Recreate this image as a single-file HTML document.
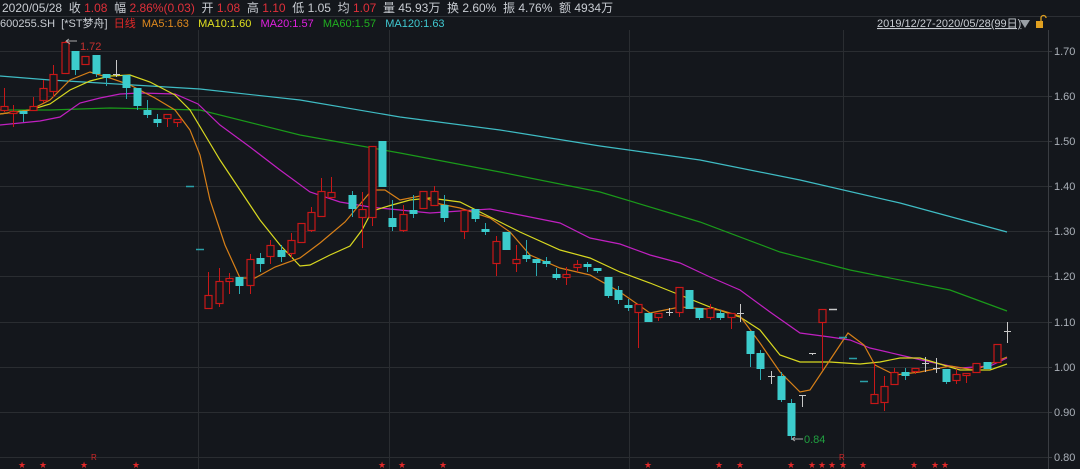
<!DOCTYPE html>
<html><head><meta charset="utf-8"><style>
body{margin:0;background:#14171c;width:1080px;height:469px;overflow:hidden;font-family:"Liberation Sans","Noto Sans CJK SC",sans-serif;}
.h1{position:absolute;top:0;left:2px;height:16px;font-size:12px;line-height:16px;color:#c8ccd2;white-space:nowrap}
.r{color:#e0303a}
.h2{position:absolute;top:17px;left:0;font-size:11px;line-height:14px;color:#c8ccd2;white-space:nowrap}
svg{position:absolute;left:0;top:0}
</style></head><body>
<svg id="s" width="1080" height="469" xmlns="http://www.w3.org/2000/svg">
<line x1="0" y1="16.5" x2="1080" y2="16.5" stroke="#2c2f34"/>
<g stroke="#2a2d31" stroke-width="1">
<line x1="0" y1="51.5" x2="1048" y2="51.5"/><line x1="0" y1="96.5" x2="1048" y2="96.5"/><line x1="0" y1="141.5" x2="1048" y2="141.5"/><line x1="0" y1="186.5" x2="1048" y2="186.5"/><line x1="0" y1="231.5" x2="1048" y2="231.5"/><line x1="0" y1="276.5" x2="1048" y2="276.5"/><line x1="0" y1="322.5" x2="1048" y2="322.5"/><line x1="0" y1="367.5" x2="1048" y2="367.5"/><line x1="0" y1="412.5" x2="1048" y2="412.5"/><line x1="0" y1="457.5" x2="1048" y2="457.5"/>
<line x1="198.5" y1="30" x2="198.5" y2="469"/><line x1="389.5" y1="30" x2="389.5" y2="469"/><line x1="629.5" y1="30" x2="629.5" y2="469"/><line x1="843.5" y1="30" x2="843.5" y2="469"/>
<line x1="1048.5" y1="30" x2="1048.5" y2="469" stroke="#3a3d42"/>
</g>
<g fill="#aab0b8" font-size="11" font-family="Liberation Sans">
<text x="1054" y="55">1.70</text><text x="1054" y="100">1.60</text><text x="1054" y="145">1.50</text><text x="1054" y="190">1.40</text><text x="1054" y="235">1.30</text><text x="1054" y="280">1.20</text><text x="1054" y="326">1.10</text><text x="1054" y="371">1.00</text><text x="1054" y="416">0.90</text><text x="1054" y="461">0.80</text>
</g>
<g stroke="#3a3d42"><line x1="1048" y1="51.5" x2="1052" y2="51.5"/><line x1="1048" y1="96.5" x2="1052" y2="96.5"/><line x1="1048" y1="141.5" x2="1052" y2="141.5"/><line x1="1048" y1="186.5" x2="1052" y2="186.5"/><line x1="1048" y1="231.5" x2="1052" y2="231.5"/><line x1="1048" y1="276.5" x2="1052" y2="276.5"/><line x1="1048" y1="322.5" x2="1052" y2="322.5"/><line x1="1048" y1="367.5" x2="1052" y2="367.5"/><line x1="1048" y1="412.5" x2="1052" y2="412.5"/><line x1="1048" y1="457.5" x2="1052" y2="457.5"/></g>
<text x="877" y="27" fill="#c8ccd2" font-size="11" font-family="Liberation Sans,Noto Sans CJK SC,sans-serif" text-decoration="underline">2019/12/27-2020/05/28(99日)</text>
<polygon points="1020,20 1030,20 1025,28" fill="#9aa0a6"/>
<rect x="1036" y="21" width="7" height="7" fill="#e0a020"/>
<path d="M1041 21 v-3 a2.5 2.5 0 0 1 5 0" stroke="#e0a020" fill="none" stroke-width="1.3"/>
<g id="ma" fill="none" stroke-width="1.2"></g>
<g id="cd"></g>
<text x="80" y="50" fill="#c8302e" font-size="11" font-family="Liberation Sans">1.72</text>
<path d="M66 41 l4 3 M66 41 l3 -2 M66 41 h11" stroke="#aaa" fill="none"/>
<text x="804" y="443" fill="#20a040" font-size="11" font-family="Liberation Sans">0.84</text>
<path d="M792 439 h11 M792 439 l3 -2 M792 439 l3 2" stroke="#aaa" fill="none"/>
<g fill="#e02828" font-size="9" font-family="DejaVu Sans" id="st"></g>
<g fill="#d02828" font-size="8" font-family="Liberation Sans"><text x="91" y="460">R</text><text x="839" y="460">R</text></g>
</svg>
<div class="h1">2020/05/28&nbsp; 收 <span class="r">1.08</span>&nbsp; 幅 <span class="r">2.86%(0.03)</span>&nbsp; 开 <span class="r">1.08</span>&nbsp; 高 <span class="r">1.10</span>&nbsp; 低 1.05&nbsp; 均 <span class="r">1.07</span>&nbsp; 量 45.93万&nbsp; 换 2.60%&nbsp; 振 4.76%&nbsp; 额 4934万</div>
<div class="h2">600255.SH&nbsp; [*ST梦舟]&nbsp; <span style="color:#e02828">日线</span>&nbsp; <span style="color:#e08a1e">MA5:1.63</span>&nbsp;&nbsp; <span style="color:#e0e020">MA10:1.60</span>&nbsp;&nbsp; <span style="color:#e020e0">MA20:1.57</span>&nbsp;&nbsp; <span style="color:#20b020">MA60:1.57</span>&nbsp;&nbsp; <span style="color:#40c8d0">MA120:1.63</span></div>
<script>
var NS="http://www.w3.org/2000/svg";
function el(p,t,a){var e=document.createElementNS(NS,t);for(var k in a)e.setAttribute(k,a[k]);p.appendChild(e);return e;}
var ma=document.getElementById('ma');
var L=[
["#3fbcc4",[[0,76],[50,80],[100,83],[200,89],[300,100],[400,117],[500,130],[600,146],[700,160],[800,180],[900,203],[1007,232]]],
["#1a9a1a",[[0,110],[50,110],[110,108],[200,110],[300,135],[400,153],[500,172],[600,192],[700,222],[780,252],[850,270],[950,290],[1007,311]]],
["#c020c0",[[0,125],[40,121],[60,117],[80,103],[100,98],[120,94],[140,93],[175,94],[198,104],[220,125],[250,147],[280,170],[310,192],[340,202],[370,207],[400,210],[430,213],[460,211],[490,209],[520,215],[560,223],[590,238],[620,244],[650,255],[680,263],[710,277],[740,290],[770,312],[800,333],[830,337],[850,340],[870,348],[900,355],[930,362],[960,368],[990,366],[1007,358]]],
["#d8d820",[[0,114],[30,110],[50,104],[70,90],[90,81],[110,76],[130,75],[150,82],[175,95],[190,110],[205,135],[220,160],[240,190],[260,220],[280,245],[300,266],[310,265],[330,255],[350,246],[362,230],[372,211],[392,205],[410,200],[430,198],[460,202],[490,217],[520,232],[560,250],[590,258],[620,272],[650,283],[680,295],[710,307],[740,317],[760,330],[780,355],[800,362],[830,362],[860,364],[880,362],[900,358],[920,358],[940,364],[960,370],[990,370],[1007,364]]],
["#d88018",[[0,114],[30,110],[50,100],[70,80],[90,72],[110,78],[130,85],[155,98],[175,110],[190,130],[200,155],[210,200],[225,245],[240,278],[255,278],[275,267],[300,258],[320,243],[345,222],[372,190],[385,190],[400,200],[420,196],[440,204],[460,208],[490,218],[510,232],[530,255],[560,268],[590,275],[620,292],[650,313],[680,307],[720,310],[740,316],[760,343],[780,372],[800,392],[810,390],[830,360],[848,333],[864,345],[875,365],[895,375],[920,372],[950,366],[975,370],[1007,357]]]];
L.forEach(function(l){el(ma,'polyline',{points:l[1].map(function(p){return p.join(',')}).join(' '),stroke:l[0]});});
// type: r=red, c=cyan, w=white cross, d=cyan dash, x=white dash ; x, top, bottom, wickTop, wickBot
var D=[["r",4,106,110,88,112],["r",13,111,113,105,127],["c",23,111,113,111,122],["r",33,106,110,97,110],["r",43,88,100,80,103],["r",53,74,91,65,97],["r",65,42,73,41,73],["c",75,51,69,51,75],["r",85,56,64,56,64],["c",96,55,73,55,77],["c",106,74,77,74,86],["w",116,74,74,60,77],["c",126,75,87,75,99],["c",137,88,105,88,110],["c",147,110,114,100,118],["c",157,119,122,114,127],["r",167,114,118,114,127],["r",177,119,122,119,127],["d",190,186,186,186,186],["d",200,249,249,249,249],["r",208,295,308,272,308],["r",219,281,303,268,307],["r",229,278,281,273,294],["c",239,277,285,277,294],["r",250,259,285,254,294],["c",260,258,263,253,272],["r",270,245,256,240,264],["c",281,250,256,245,262],["r",291,240,253,233,258],["r",301,223,242,223,242],["r",311,212,230,207,232],["r",321,191,216,178,217],["r",331,192,197,177,199],["c",352,195,208,191,217],["r",362,209,217,192,248],["r",372,146,217,146,226],["c",382,141,186,141,186],["c",392,218,226,200,231],["r",403,214,230,205,232],["c",413,210,213,195,218],["r",423,191,208,191,208],["r",434,191,205,186,205],["c",444,205,217,195,222],["r",464,210,231,210,239],["c",475,209,218,209,222],["c",485,229,231,223,235],["r",496,241,263,236,276],["c",506,232,249,232,249],["r",516,259,263,245,272],["c",526,255,258,240,262],["c",536,259,262,259,276],["c",546,261,263,257,267],["c",556,274,277,268,280],["r",566,274,277,267,285],["r",577,264,267,260,272],["c",587,264,266,262,272],["c",597,268,270,268,273],["c",608,277,295,277,298],["c",618,290,299,286,304],["c",628,305,307,299,311],["r",638,304,312,304,348],["c",648,313,321,313,321],["r",658,313,317,313,321],["w",669,312,312,308,316],["r",679,287,312,287,317],["c",689,290,308,290,308],["c",699,308,317,308,320],["r",710,308,317,304,320],["c",720,313,317,310,320],["r",731,313,317,313,329],["w",740,313,313,304,322],["c",750,331,353,331,367],["c",760,353,368,350,380],["w",771,376,376,371,384],["c",781,376,399,372,402],["c",791,403,435,399,440],["w",802,395,395,395,407],["w",812,353,353,353,355],["r",822,309,322,309,370],["x",833,309,309,309,309],["d",843,337,337,337,337],["d",853,358,358,358,358],["d",864,381,381,381,381],["r",874,394,403,363,403],["r",884,386,402,376,411],["r",894,372,384,368,384],["c",905,372,375,368,380],["r",915,368,371,368,374],["w",925,363,363,357,372],["w",936,368,368,358,373],["c",946,369,381,369,384],["r",956,374,380,369,384],["r",966,373,375,373,383],["r",976,363,372,363,372],["c",987,362,368,362,368],["r",997,344,362,344,362],["w",1007,331,331,322,343]];
var cd=document.getElementById('cd');
D.forEach(function(d){var t=d[0],x=d[1];
 var col=t=="r"?"#c81818":t=="w"||t=="x"?"#c8c8c8":"#3ccccc";
 if(t=="d"||t=="x"){el(cd,'line',{x1:x-4,x2:x+4,y1:d[2]+.5,y2:d[2]+.5,stroke:t=="d"?"#2aa0a8":"#c8c8c8","stroke-width":1.5});return;}
 el(cd,'line',{x1:x+.5,x2:x+.5,y1:d[4],y2:d[5],stroke:t=="c"?"#2aa8b0":col});
 if(t=="w"){el(cd,'line',{x1:x-3,x2:x+4,y1:d[2]+.5,y2:d[2]+.5,stroke:col});return;}
 var h=Math.max(d[3]-d[2],1.5);
 if(t=="r")el(cd,'rect',{x:x-3,y:d[2]+.5,width:7,height:h,fill:"#14171c",stroke:col,"stroke-width":1.2});
 else el(cd,'rect',{x:x-3.5,y:d[2],width:8,height:h+1,fill:col});
});
var st=document.getElementById('st');
[22,43,84,136,382,402,443,648,719,740,791,812,822,832,843,863,914,935,945].forEach(function(x){var t=el(st,'text',{x:x-4,y:468});t.textContent="★";});
</script>
</body></html>
